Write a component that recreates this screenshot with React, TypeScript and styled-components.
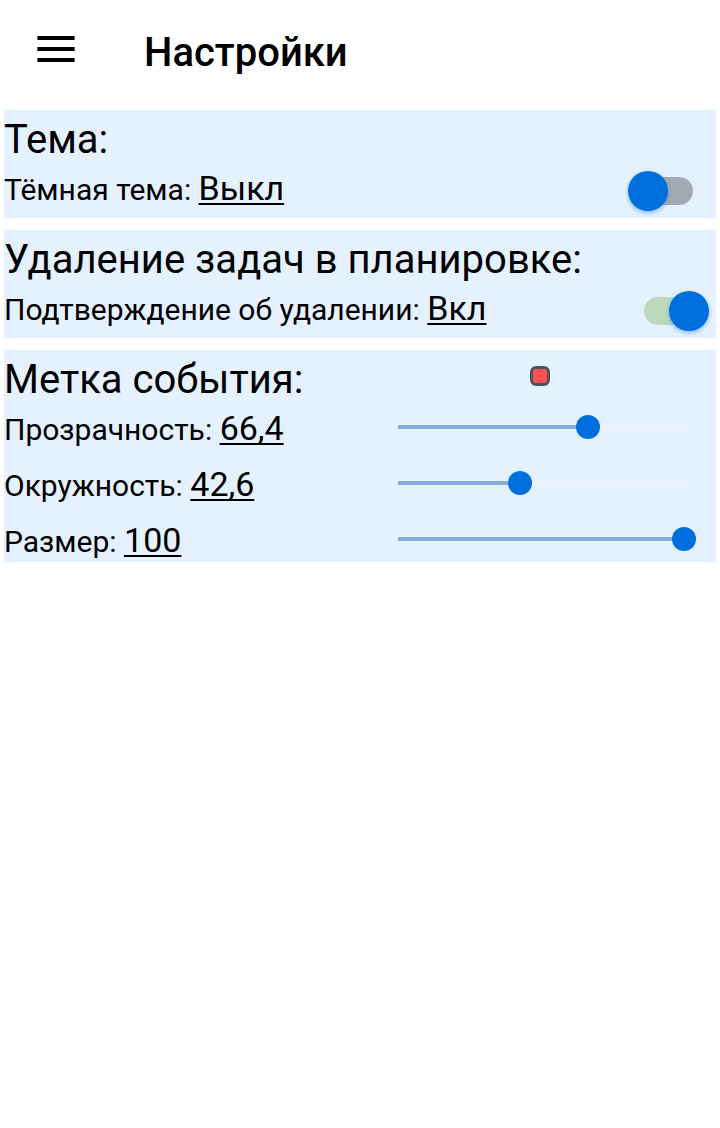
import React, { useState } from "react";
import styled, { createGlobalStyle } from "styled-components";

const color = {
  page: "#ffffff",
  card: "#e5f1ff",
  text: "#000000",
  accent: "#006fde",
  sliderFill: "#89aed7",
  sliderRest: "#ebf3ff",
  switchOff: "#a1a9b2",
  switchOn: "#bdd8bb",
};

const GlobalStyle = createGlobalStyle`
  *, *::before, *::after { box-sizing: border-box; }
  body {
    margin: 0;
    background: ${color.page};
    color: ${color.text};
    font-family: Roboto, "Liberation Sans", sans-serif;
  }
`;

const Header = styled.header`
  display: flex;
  align-items: flex-start;
  height: 110px;
`;

const MenuButton = styled.button`
  display: flex;
  align-items: center;
  justify-content: center;
  width: 112px;
  height: 98px;
  margin-right: 32px;
  padding: 0;
  border: 0;
  background: none;
  color: inherit;
  cursor: pointer;
`;

const Title = styled.h1`
  margin: 0;
  font-size: 40px;
  font-weight: 500;
  line-height: 106px;
`;

const Sections = styled.main`
  display: flex;
  flex-direction: column;
  gap: 12px;
  padding: 0 4px;
`;

const Card = styled.section`
  background: ${color.card};
`;

const CardHeading = styled.h2`
  margin: 0;
  padding: 7px 0 3px;
  font-size: 40px;
  font-weight: 400;
  line-height: 46px;
  white-space: nowrap;
`;

const ToggleRow = styled.div`
  display: flex;
  align-items: flex-start;
  justify-content: space-between;
  height: 52px;
  padding-right: 7px;
`;

const SplitRow = styled.div`
  display: grid;
  grid-template-columns: 1fr 1fr;
  align-items: start;
`;

const SliderRows = styled.div`
  display: flex;
  flex-direction: column;
  gap: 12px;
`;

const Label = styled.label`
  padding: 5px 0 1px;
  font-size: 30px;
  line-height: 38px;
  white-space: nowrap;
`;

const Value = styled.span`
  font-size: 34px;
  line-height: 34px;
  text-decoration: underline;
  text-decoration-thickness: 2px;
  text-underline-offset: 3px;
  text-decoration-skip-ink: none;
`;

const Switch = styled.input`
  appearance: none;
  display: grid;
  grid-template-columns: 1fr;
  align-items: center;
  flex: none;
  width: 81px;
  height: 50px;
  margin: 0;
  cursor: pointer;

  &::before,
  &::after {
    content: "";
    grid-area: 1 / 1;
  }

  &::before {
    justify-self: center;
    width: 49px;
    height: 28px;
    border-radius: 14px;
    background: ${(p) => (p.checked ? color.switchOn : color.switchOff)};
  }

  &::after {
    justify-self: ${(p) => (p.checked ? "end" : "start")};
    width: 40px;
    height: 40px;
    border-radius: 50%;
    background: ${color.accent};
    box-shadow: 0 2px 4px rgba(0, 111, 222, 0.4);
  }
`;

const Slider = styled.input`
  --fill: calc(12px + (100% - 24px) * var(--ratio));
  appearance: none;
  display: block;
  height: 42px;
  margin: 0 20px 0 26px;
  background: none;
  cursor: pointer;

  &::-webkit-slider-runnable-track {
    height: 4px;
    background: linear-gradient(
      to right,
      transparent 12px,
      ${color.sliderFill} 12px var(--fill),
      ${color.sliderRest} var(--fill) calc(100% - 12px),
      transparent calc(100% - 12px)
    );
  }

  &::-webkit-slider-thumb {
    appearance: none;
    width: 24px;
    height: 24px;
    margin-top: -10px;
    border: 0;
    border-radius: 50%;
    background: ${color.accent};
  }
`;

const MarkerArea = styled.div`
  display: flex;
  justify-content: center;
  padding: 16px 0 0 4px;
`;

const Marker = styled.div`
  width: 20px;
  height: 20px;
  border: 3px solid #4d555c;
  border-radius: 6px;
  background: #fb5155;
`;

function MenuIcon() {
  return (
    <svg width="38" height="26" viewBox="0 0 38 26" aria-hidden="true">
      <path d="M.4 2H37.6M.4 13H37.6M.4 24H37.6" stroke="currentColor" strokeWidth="4" />
    </svg>
  );
}

type ToggleProps = { id: string; label: string; initial: boolean };

function ToggleSetting({ id, label, initial }: ToggleProps) {
  const [on, setOn] = useState(initial);
  return (
    <ToggleRow>
      <Label htmlFor={id}>
        {label}: <Value>{on ? "Вкл" : "Выкл"}</Value>
      </Label>
      <Switch id={id} type="checkbox" role="switch" checked={on} onChange={(e) => setOn(e.target.checked)} />
    </ToggleRow>
  );
}

type SliderProps = { id: string; label: string; initial: number };

function SliderSetting({ id, label, initial }: SliderProps) {
  const [value, setValue] = useState(initial);
  return (
    <SplitRow>
      <Label htmlFor={id}>
        {label}: <Value>{String(value).replace(".", ",")}</Value>
      </Label>
      <Slider
        id={id}
        type="range"
        min={0}
        max={100}
        step={0.1}
        value={value}
        onChange={(e) => setValue(Number(e.target.value))}
        style={{ "--ratio": value / 100 } as React.CSSProperties}
      />
    </SplitRow>
  );
}

export default function App() {
  return (
    <>
      <GlobalStyle />
      <Header>
        <MenuButton type="button" aria-label="Меню">
          <MenuIcon />
        </MenuButton>
        <Title>Настройки</Title>
      </Header>
      <Sections>
        <Card>
          <CardHeading>Тема:</CardHeading>
          <ToggleSetting id="dark-theme" label="Тёмная тема" initial={false} />
        </Card>
        <Card>
          <CardHeading>Удаление задач в планировке:</CardHeading>
          <ToggleSetting id="confirm-delete" label="Подтверждение об удалении" initial={true} />
        </Card>
        <Card>
          <SplitRow>
            <CardHeading>Метка события:</CardHeading>
            <MarkerArea>
              <Marker />
            </MarkerArea>
          </SplitRow>
          <SliderRows>
            <SliderSetting id="opacity" label="Прозрачность" initial={66.4} />
            <SliderSetting id="roundness" label="Окружность" initial={42.6} />
            <SliderSetting id="size" label="Размер" initial={100} />
          </SliderRows>
        </Card>
      </Sections>
    </>
  );
}
